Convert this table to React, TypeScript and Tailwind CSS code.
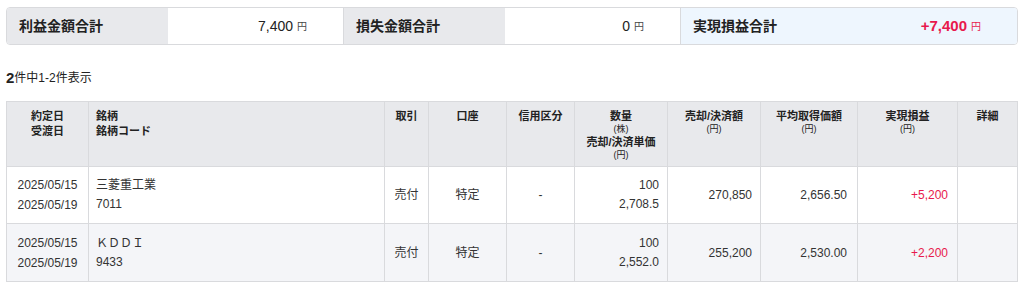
import React from 'react';

const RED = 'text-[#e8194d]';

const rows = [
  { trade: '2025/05/15', settle: '2025/05/19', name: '三菱重工業', code: '7011', side: '売付', acct: '特定', credit: '-', qty: '100', price: '2,708.5', amount: '270,850', avg: '2,656.50', pl: '+5,200' },
  { trade: '2025/05/15', settle: '2025/05/19', name: 'ＫＤＤＩ', code: '9433', side: '売付', acct: '特定', credit: '-', qty: '100', price: '2,552.0', amount: '255,200', avg: '2,530.00', pl: '+2,200' },
];

function SummaryCell({ label, value, highlight, last }: { label: string; value: string; highlight?: boolean; last?: boolean }) {
  return (
    <div className={`flex flex-1 ${last ? 'bg-[#eef6fe]' : ''} ${last ? '' : 'border-r border-[#d9dadd]'}`}>
      <div className={`w-[161px] shrink-0 flex items-center pl-3 text-[14px] font-bold text-[#222] ${last ? '' : 'bg-[#e8e9ec]'}`}>{label}</div>
      <div className="flex-1 flex items-center justify-end pr-9">
        <span className={highlight ? `${RED} text-[15px] font-bold` : 'text-[14px] text-[#222]'}>{value}</span>
        <span className={`ml-1 text-[10px] ${highlight ? RED : 'text-[#444]'}`}>円</span>
      </div>
    </div>
  );
}

export default function App() {
  const th = 'align-top border-l border-[#d9dadd] pt-[7px] font-bold text-[11px] leading-[15px] text-[#222]';
  const td = 'border-l border-t border-[#d9dadd] text-[12px] text-[#333]';
  return (
    <div className="font-[family-name:Liberation_Sans,Noto_Sans_CJK_JP,sans-serif] bg-white w-[1024px] h-[286px] px-[6px] pt-[7px]">
      <div className="flex h-[38px] border border-[#d9dadd] rounded overflow-hidden">
        <SummaryCell label="利益金額合計" value="7,400" />
        <SummaryCell label="損失金額合計" value="0" />
        <SummaryCell label="実現損益合計" value="+7,400" highlight last />
      </div>

      <div className="mt-[23px] h-[20px] flex items-center text-[#222]">
        <span className="text-[15px] font-bold">2</span>
        <span className="text-[12px]">件中1-2件表示</span>
      </div>

      <table className="mt-[13px] w-[1012px] table-fixed border-collapse border border-[#d9dadd]">
        <thead>
          <tr className="bg-[#e8e9ec] h-[65px]">
            <th className={`${th} w-[82px] text-center border-l-0`}>約定日<br />受渡日</th>
            <th className={`${th} w-[296px] text-left pl-[7px]`}>銘柄<br />銘柄コード</th>
            <th className={`${th} w-[44px] text-center`}>取引</th>
            <th className={`${th} w-[78px] text-center`}>口座</th>
            <th className={`${th} w-[68px] text-center`}>信用区分</th>
            <th className={`${th} w-[93px] text-center`}>
              <div>数量</div>
              <div className="text-[9px] leading-[11px] font-normal">(株)</div>
              <div>売却/決済単価</div>
              <div className="text-[9px] leading-[11px] font-normal">(円)</div>
            </th>
            <th className={`${th} w-[93px] text-center`}>
              <div>売却/決済額</div>
              <div className="text-[9px] leading-[11px] font-normal">(円)</div>
            </th>
            <th className={`${th} w-[97px] text-center`}>
              <div>平均取得価額</div>
              <div className="text-[9px] leading-[11px] font-normal">(円)</div>
            </th>
            <th className={`${th} w-[100px] text-center`}>
              <div>実現損益</div>
              <div className="text-[9px] leading-[11px] font-normal">(円)</div>
            </th>
            <th className={`${th} text-center`}>詳細</th>
          </tr>
        </thead>
        <tbody>
          {rows.map((r, i) => (
            <tr key={r.code} className={i === 1 ? 'bg-[#f4f5f8] h-[58px]' : 'bg-white h-[57px]'}>
              <td className={`${td} border-l-0 text-center leading-[20px]`}>{r.trade}<br />{r.settle}</td>
              <td className={`${td} pl-[7px] leading-[19px]`}>
                <div>{r.name}</div>
                <div>{r.code}</div>
              </td>
              <td className={`${td} text-center`}>{r.side}</td>
              <td className={`${td} text-center`}>{r.acct}</td>
              <td className={`${td} text-center`}>{r.credit}</td>
              <td className={`${td} text-right pr-2 leading-[19px]`}>
                <div>{r.qty}</div>
                <div>{r.price}</div>
              </td>
              <td className={`${td} text-right pr-2`}>{r.amount}</td>
              <td className={`${td} text-right pr-[10px]`}>{r.avg}</td>
              <td className={`${td} text-right pr-[9px] ${RED}`}>{r.pl}</td>
              <td className={td}></td>
            </tr>
          ))}
        </tbody>
      </table>
    </div>
  );
}
